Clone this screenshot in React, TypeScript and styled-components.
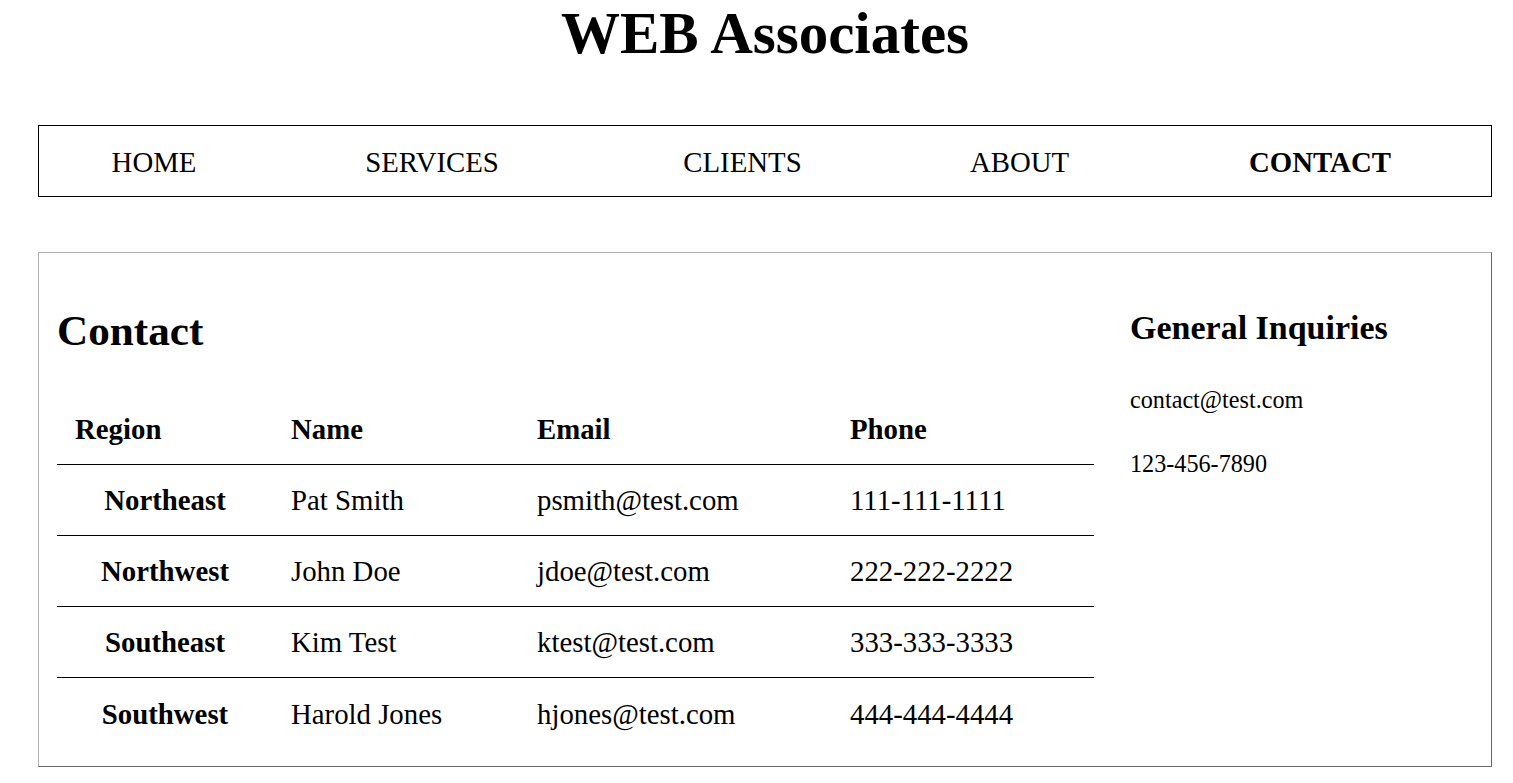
import React from "react";
import styled, { createGlobalStyle } from "styled-components";

const GlobalStyle = createGlobalStyle`
  *, *::before, *::after { box-sizing: border-box; }
  html, body { margin: 0; padding: 0; background: #ffffff; }
  body {
    font-family: "Liberation Serif", "Times New Roman", serif;
    color: #000000;
  }
`;

const Page = styled.div`
  width: 1454px;
  margin-left: 38px;
`;

const Title = styled.h1`
  margin: 0;
  font-size: 59px;
  line-height: 66px;
  font-weight: 700;
  text-align: center;
`;

const Nav = styled.nav`
  margin-top: 59px;
  border: 1px solid #000000;
`;

const NavList = styled.ul`
  list-style: none;
  margin: 0;
  padding: 20px 0 18px;
  display: grid;
  grid-template-columns: 230px 326px 295px 259px 342px;
`;

const NavItem = styled.li<{ $active?: boolean }>`
  text-align: center;
  font-size: 28.8px;
  line-height: 32px;
  font-weight: ${(p) => (p.$active ? 700 : 400)};
`;

const Main = styled.main`
  margin-top: 55px;
  border: 1px solid;
  border-color: #b0b0b0 #666666 #666666 #b0b0b0;
  padding: 53px 18px 17px 18px;
  display: grid;
  grid-template-columns: 1037px 1fr;
  column-gap: 36px;
  align-items: start;
`;

const Section = styled.section``;

const Heading = styled.h2`
  margin: 0 0 38px;
  font-size: 43.2px;
  line-height: 50px;
  font-weight: 700;
`;

const Table = styled.table`
  width: 1037px;
  border-collapse: collapse;
  table-layout: fixed;
  font-size: 28.8px;
`;

const HeadCell = styled.th<{ $w: number }>`
  width: ${(p) => p.$w}px;
  height: 70px;
  padding: 0 0 0 18px;
  text-align: left;
  font-weight: 700;
  line-height: 32px;
  border-bottom: 1px solid #000000;
`;

const Row = styled.tr`
  & + & td,
  & + & th {
    border-top: 1px solid #000000;
  }
`;

const RegionCell = styled.th`
  height: 71.3px;
  padding: 0;
  text-align: center;
  font-weight: 700;
  line-height: 32px;
`;

const Cell = styled.td`
  height: 71.3px;
  padding: 0 0 0 18px;
  line-height: 32px;
  font-weight: 400;
`;

const Aside = styled.aside``;

const AsideHeading = styled.h3`
  margin: 0 0 36px;
  font-size: 34px;
  line-height: 44px;
  font-weight: 700;
`;

const AsideText = styled.p`
  margin: 0 0 36px;
  font-size: 24.2px;
  line-height: 28px;
`;

const navItems = ["HOME", "SERVICES", "CLIENTS", "ABOUT", "CONTACT"];

const columns = [
  { label: "Region", w: 216 },
  { label: "Name", w: 246 },
  { label: "Email", w: 313 },
  { label: "Phone", w: 262 },
];

const contacts = [
  { region: "Northeast", name: "Pat Smith", email: "psmith@test.com", phone: "111-111-1111" },
  { region: "Northwest", name: "John Doe", email: "jdoe@test.com", phone: "222-222-2222" },
  { region: "Southeast", name: "Kim Test", email: "ktest@test.com", phone: "333-333-3333" },
  { region: "Southwest", name: "Harold Jones", email: "hjones@test.com", phone: "444-444-4444" },
];

export default function App() {
  return (
    <>
      <GlobalStyle />
      <Page>
        <Title>WEB Associates</Title>
        <Nav>
          <NavList>
            {navItems.map((item) => (
              <NavItem key={item} $active={item === "CONTACT"}>
                {item}
              </NavItem>
            ))}
          </NavList>
        </Nav>
        <Main>
          <Section>
            <Heading>Contact</Heading>
            <Table>
              <thead>
                <tr>
                  {columns.map((c) => (
                    <HeadCell key={c.label} $w={c.w}>
                      {c.label}
                    </HeadCell>
                  ))}
                </tr>
              </thead>
              <tbody>
                {contacts.map((c) => (
                  <Row key={c.region}>
                    <RegionCell scope="row">{c.region}</RegionCell>
                    <Cell>{c.name}</Cell>
                    <Cell>{c.email}</Cell>
                    <Cell>{c.phone}</Cell>
                  </Row>
                ))}
              </tbody>
            </Table>
          </Section>
          <Aside>
            <AsideHeading>General Inquiries</AsideHeading>
            <AsideText>contact@test.com</AsideText>
            <AsideText>123-456-7890</AsideText>
          </Aside>
        </Main>
      </Page>
    </>
  );
}
